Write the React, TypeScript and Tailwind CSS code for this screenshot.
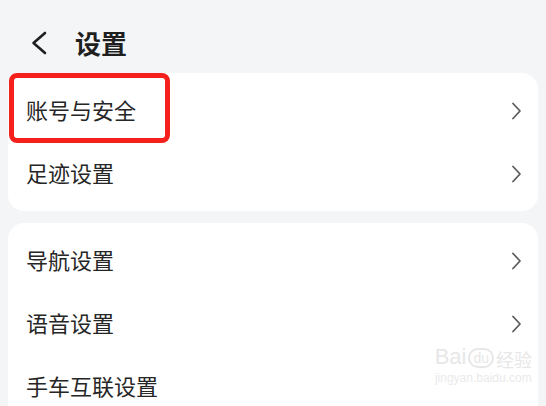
import React from "react";

const font = "font-['Noto_Sans_CJK_SC','Noto_Sans',sans-serif]";

function Chevron() {
    return (
        <svg width="11" height="18" viewBox="0 0 11 18" fill="none" className="shrink-0">
            <path d="M2 1.5 L9 9 L2 16.5" stroke="#5c5c5c" strokeWidth="1.8" strokeLinecap="round" strokeLinejoin="round" />
        </svg>
    );
}

function Row({ label, highlight, arrow = true }: { label: string; highlight?: boolean; arrow?: boolean }) {
    return (
        <div className="relative h-[63px] flex items-center justify-between pl-[18px] pr-[16px]">
            <span className="text-[22px] leading-none text-[#262626] -mt-[4px]">{label}</span>
            {arrow && <Chevron />}
            {highlight && (
                <div className="absolute left-[1px] top-[-6px] w-[161px] h-[70px] border-[5px] border-[#f5201b] rounded-[8px]" />
            )}
        </div>
    );
}

export default function App() {
    return (
        <div className={`relative w-[546px] h-[406px] overflow-hidden bg-[#f4f5f7] ${font}`}>
            {/* Header */}
            <div className="h-[73px] pt-[13px] flex items-center pl-[30px]">
                <svg width="18" height="24" viewBox="0 0 18 24" fill="none">
                    <path d="M15 2 L3.5 12 L15 22" stroke="#1f1f1f" strokeWidth="2.6" strokeLinecap="round" strokeLinejoin="round" />
                </svg>
                <span className="ml-[27px] text-[26px] font-bold leading-none text-[#1f1f1f]">设置</span>
            </div>

            <div className="px-[8px] flex flex-col gap-[12px]">
                <div className="bg-white rounded-[16px] py-[6px]">
                    <Row label="账号与安全" highlight />
                    <Row label="足迹设置" />
                </div>
                <div className="bg-white rounded-[16px] py-[6px]">
                    <Row label="导航设置" />
                    <Row label="语音设置" />
                    <Row label="手车互联设置" arrow={false} />
                </div>
            </div>

            {/* watermark */}
            <div className="absolute right-[14px] top-[346px] flex flex-col items-center opacity-60">
                <div className="flex items-end gap-[2px] text-[#d8d8d8]">
                    <span className="text-[22px] font-['Liberation_Sans',sans-serif] leading-none">Bai</span>
                    <span className="text-[14px] leading-none border-[2px] border-[#d8d8d8] rounded-full px-[3px] py-[1px] font-['Liberation_Sans',sans-serif]">du</span>
                    <span className="text-[18px] leading-none">经验</span>
                </div>
                <span className="text-[12px] leading-none mt-[4px] text-[#dcdcdc] font-['Liberation_Sans',sans-serif]">jingyan.baidu.com</span>
            </div>
        </div>
    );
}
